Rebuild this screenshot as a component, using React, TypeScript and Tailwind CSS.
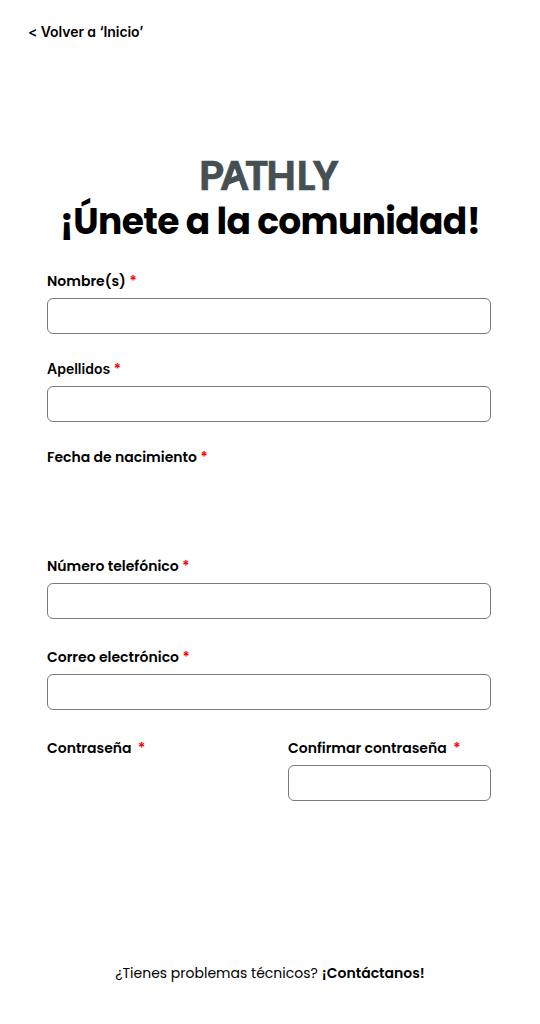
type FieldProps = {
  id: string;
  label: string;
  labelClass?: string;
  starClass?: string;
  type?: string;
  className?: string;
};

function Label({ id, label, labelClass = '', starClass = 'ml-[3.5px]' }: FieldProps) {
  return (
    <label htmlFor={id} className="flex h-6 items-center whitespace-nowrap text-[14px] font-semibold leading-6 text-black">
      <span className={labelClass}>{label}</span>
      <span className={`${starClass} font-['Poppins',sans-serif] text-[#ff0000]`}>*</span>
    </label>
  );
}

function Field({ type = 'text', className = '', ...label }: FieldProps) {
  return (
    <div className={className}>
      <Label {...label} />
      <input
        id={label.id}
        type={type}
        className="mt-[5px] block h-9 w-full rounded-md border border-[#7a7a7a] bg-white px-3 text-sm outline-none"
      />
    </div>
  );
}

function Logo() {
  return (
    <svg width="140" height="32" viewBox="0 0 140 32" className="block overflow-visible" role="img" aria-label="PATHLY">
      <text x="-1 19.8 44.7 66.3 96.6 112.4" y="30.7" fontSize="41.5" fontWeight="600" fill="#465053" stroke="#465053" strokeWidth="0.6" className="font-['Poppins',sans-serif]">
        PATHLY
      </text>
      {/* slanted crossbar of the A */}
      <path d="M34.8 9.5 L42.6 31.5 H27 Z" fill="#ffffff" />
      <path d="M29 19.5 L38.8 15.5 L41 21 L27.5 26 Z" fill="#465053" />
    </svg>
  );
}

export default function App() {
  return (
    <main className="flex h-[1024px] w-[540px] flex-col bg-white font-['Poppins',sans-serif] text-black">
      <nav className="flex h-16 items-center pb-0.5 pl-7">
        <a href="#" className="whitespace-nowrap font-['Inter',sans-serif] text-[14px] font-semibold tracking-[-0.07px] [font-feature-settings:'cv11']">
          &lt; Volver a ‘Inicio’
        </a>
      </nav>
      <header className="mt-[95px] flex flex-col items-center">
        <Logo />
        <h1 className="mt-2 whitespace-nowrap text-[36px] font-bold leading-[46px] tracking-[-0.65px]">¡Únete a la comunidad!</h1>
      </header>
      <form className="mt-6 pl-[47px] pr-[49px]">
        <Field id="nombre" label="Nombre(s)" />
        <Field id="apellidos" label="Apellidos" labelClass="font-['Inter',sans-serif]" className="mt-[23px]" />
        <div className="mt-[23px] h-[85px]">
          <Label id="fecha" label="Fecha de nacimiento" />
        </div>
        <Field id="telefono" label="Número telefónico" type="tel" className="mt-6" />
        <Field id="correo" label="Correo electrónico" type="email" className="mt-[26px]" />
        <div className="mt-[26px] grid grid-cols-[1fr_203px]">
          <Label id="clave" label="Contraseña" starClass="ml-[6.5px]" />
          <Field id="confirmar" label="Confirmar contraseña" starClass="ml-[6.5px]" type="password" />
        </div>
      </form>
      <footer className="mb-[39px] mt-auto flex h-6 items-center justify-center gap-1 whitespace-nowrap text-[14px]">
        <span>¿Tienes problemas técnicos?</span>
        <a href="#" className="font-semibold">¡Contáctanos!</a>
      </footer>
    </main>
  );
}
